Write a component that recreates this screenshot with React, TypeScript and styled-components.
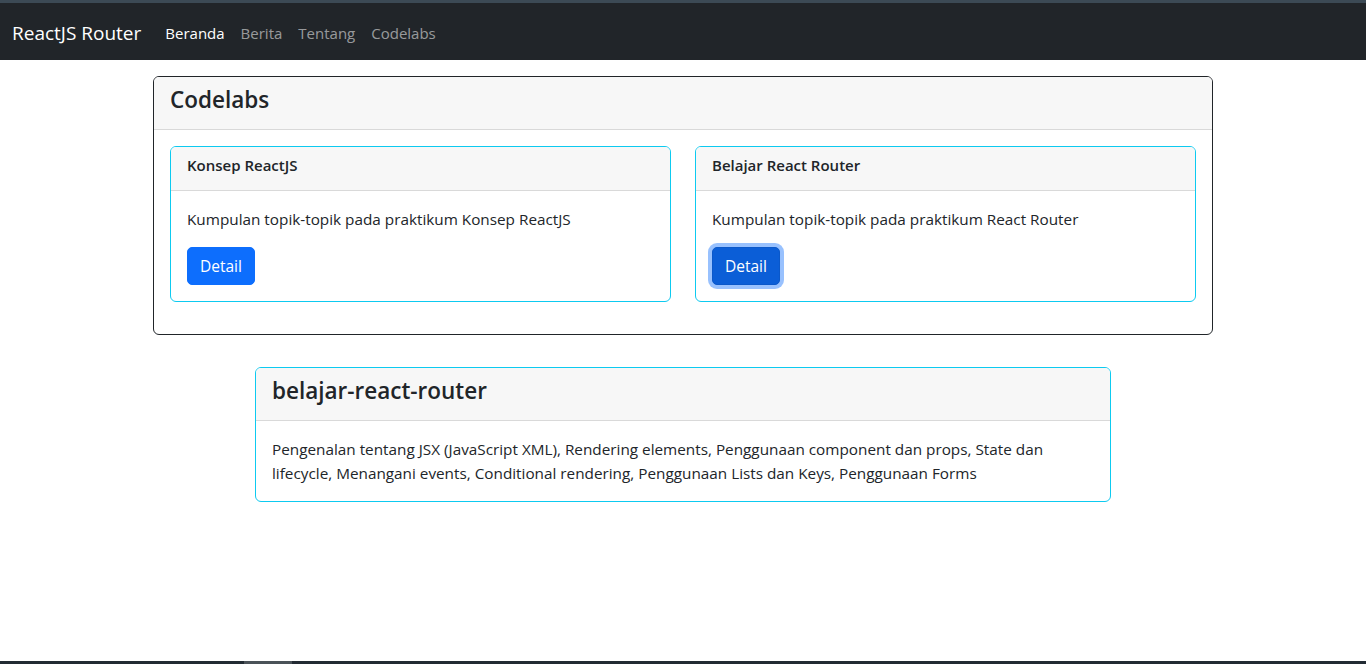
import React from "react";
import styled, { createGlobalStyle, css } from "styled-components";

const GlobalStyle = createGlobalStyle`
  * {
    box-sizing: border-box;
  }
  body {
    margin: 0;
    background: #ffffff;
    color: #212529;
    font-family: "Open Sans", "Noto Sans", sans-serif;
    font-size: 15.3px;
    line-height: 1.5;
  }
`;

const Page = styled.div`
  min-height: 664px;
  display: flex;
  flex-direction: column;
`;

const TopStrip = styled.div`
  height: 3px;
  background: #3c4a55;
`;

const Navbar = styled.nav`
  height: 57px;
  background: #212529;
  display: flex;
  align-items: center;
  padding: 2px 12px 0;
`;

const Brand = styled.a`
  color: #ffffff;
  font-size: 19px;
  line-height: 30px;
  margin-right: 16px;
  text-decoration: none;
  white-space: nowrap;
`;

const NavList = styled.div`
  display: flex;
  align-items: center;
`;

const NavLink = styled.a<{ $active?: boolean }>`
  padding: 8px;
  color: ${(p) => (p.$active ? "#ffffff" : "rgba(255, 255, 255, 0.55)")};
  text-decoration: none;
  font-size: 15px;
  line-height: 24px;
`;

const Main = styled.main`
  flex: 1;
  display: flex;
  flex-direction: column;
  align-items: center;
  padding-top: 16px;
`;

const Card = styled.div<{ $border: string; $width?: number }>`
  width: ${(p) => (p.$width ? `${p.$width}px` : "100%")};
  border: 1px solid ${(p) => p.$border};
  border-radius: 6px;
  background: #ffffff;
  overflow: hidden;
  display: flex;
  flex-direction: column;
`;

const CardHeader = styled.div<{ $small?: boolean }>`
  background: #f7f7f7;
  border-bottom: 1px solid #d9d9d9;
  padding: 8px 16px 0;
  ${(p) =>
    p.$small
      ? css`
          height: 44px;
        `
      : css`
          height: 53px;
        `}
`;

const BigTitle = styled.h4`
  margin: 0;
  font-size: 22.5px;
  font-weight: 600;
  line-height: 30px;
`;

const SmallTitle = styled.h6`
  margin: 0;
  font-size: 15px;
  font-weight: 600;
  line-height: 20px;
`;

const CardBody = styled.div<{ $bottom?: number }>`
  padding: 16px 16px ${(p) => p.$bottom ?? 16}px;
`;

const CardRow = styled.div`
  display: grid;
  grid-template-columns: 1fr 1fr;
  gap: 24px;
`;

const CardText = styled.p<{ $gap?: number }>`
  margin: 0 0 ${(p) => p.$gap ?? 0}px;
  line-height: 24px;
`;

const DetailButton = styled.button<{ $focused?: boolean }>`
  font-family: inherit;
  font-size: 15.5px;
  line-height: 24px;
  padding: 6px 12px;
  border: 1px solid #0d6efd;
  border-radius: 5px;
  background: #0d6efd;
  color: #ffffff;
  cursor: pointer;
  ${(p) =>
    p.$focused &&
    css`
      background: #0b5ed7;
      border-color: #0a58ca;
      box-shadow: 0 0 0 4px rgba(49, 132, 253, 0.5);
    `}
`;

const Spacer = styled.div`
  height: 32px;
`;

const BottomStrip = styled.div`
  height: 3px;
  background: #222b33;
  display: flex;
`;

const ScrollThumb = styled.div`
  margin-left: 244px;
  width: 48px;
  background: #4a5258;
`;

const codelabs = [
  {
    title: "Konsep ReactJS",
    text: "Kumpulan topik-topik pada praktikum Konsep ReactJS",
    focused: false,
  },
  {
    title: "Belajar React Router",
    text: "Kumpulan topik-topik pada praktikum React Router",
    focused: true,
  },
];

const App: React.FC = () => {
  return (
    <>
      <GlobalStyle />
      <Page>
        <TopStrip />
        <Navbar>
          <Brand href="#">ReactJS Router</Brand>
          <NavList>
            <NavLink $active href="#">
              Beranda
            </NavLink>
            <NavLink href="#">Berita</NavLink>
            <NavLink href="#">Tentang</NavLink>
            <NavLink href="#">Codelabs</NavLink>
          </NavList>
        </Navbar>
        <Main>
          <Card $border="#212529" $width={1060}>
            <CardHeader>
              <BigTitle>Codelabs</BigTitle>
            </CardHeader>
            <CardBody $bottom={32}>
              <CardRow>
                {codelabs.map((item) => (
                  <Card key={item.title} $border="#0dcaf0">
                    <CardHeader $small>
                      <SmallTitle>{item.title}</SmallTitle>
                    </CardHeader>
                    <CardBody>
                      <CardText $gap={16}>{item.text}</CardText>
                      <DetailButton $focused={item.focused}>Detail</DetailButton>
                    </CardBody>
                  </Card>
                ))}
              </CardRow>
            </CardBody>
          </Card>
          <Spacer />
          <Card $border="#0dcaf0" $width={856}>
            <CardHeader>
              <BigTitle>belajar-react-router</BigTitle>
            </CardHeader>
            <CardBody>
              <CardText>
                Pengenalan tentang JSX (JavaScript XML), Rendering elements,
                Penggunaan component dan props, State dan lifecycle, Menangani
                events, Conditional rendering, Penggunaan Lists dan Keys,
                Penggunaan Forms
              </CardText>
            </CardBody>
          </Card>
        </Main>
        <BottomStrip>
          <ScrollThumb />
        </BottomStrip>
      </Page>
    </>
  );
};

export default App;
